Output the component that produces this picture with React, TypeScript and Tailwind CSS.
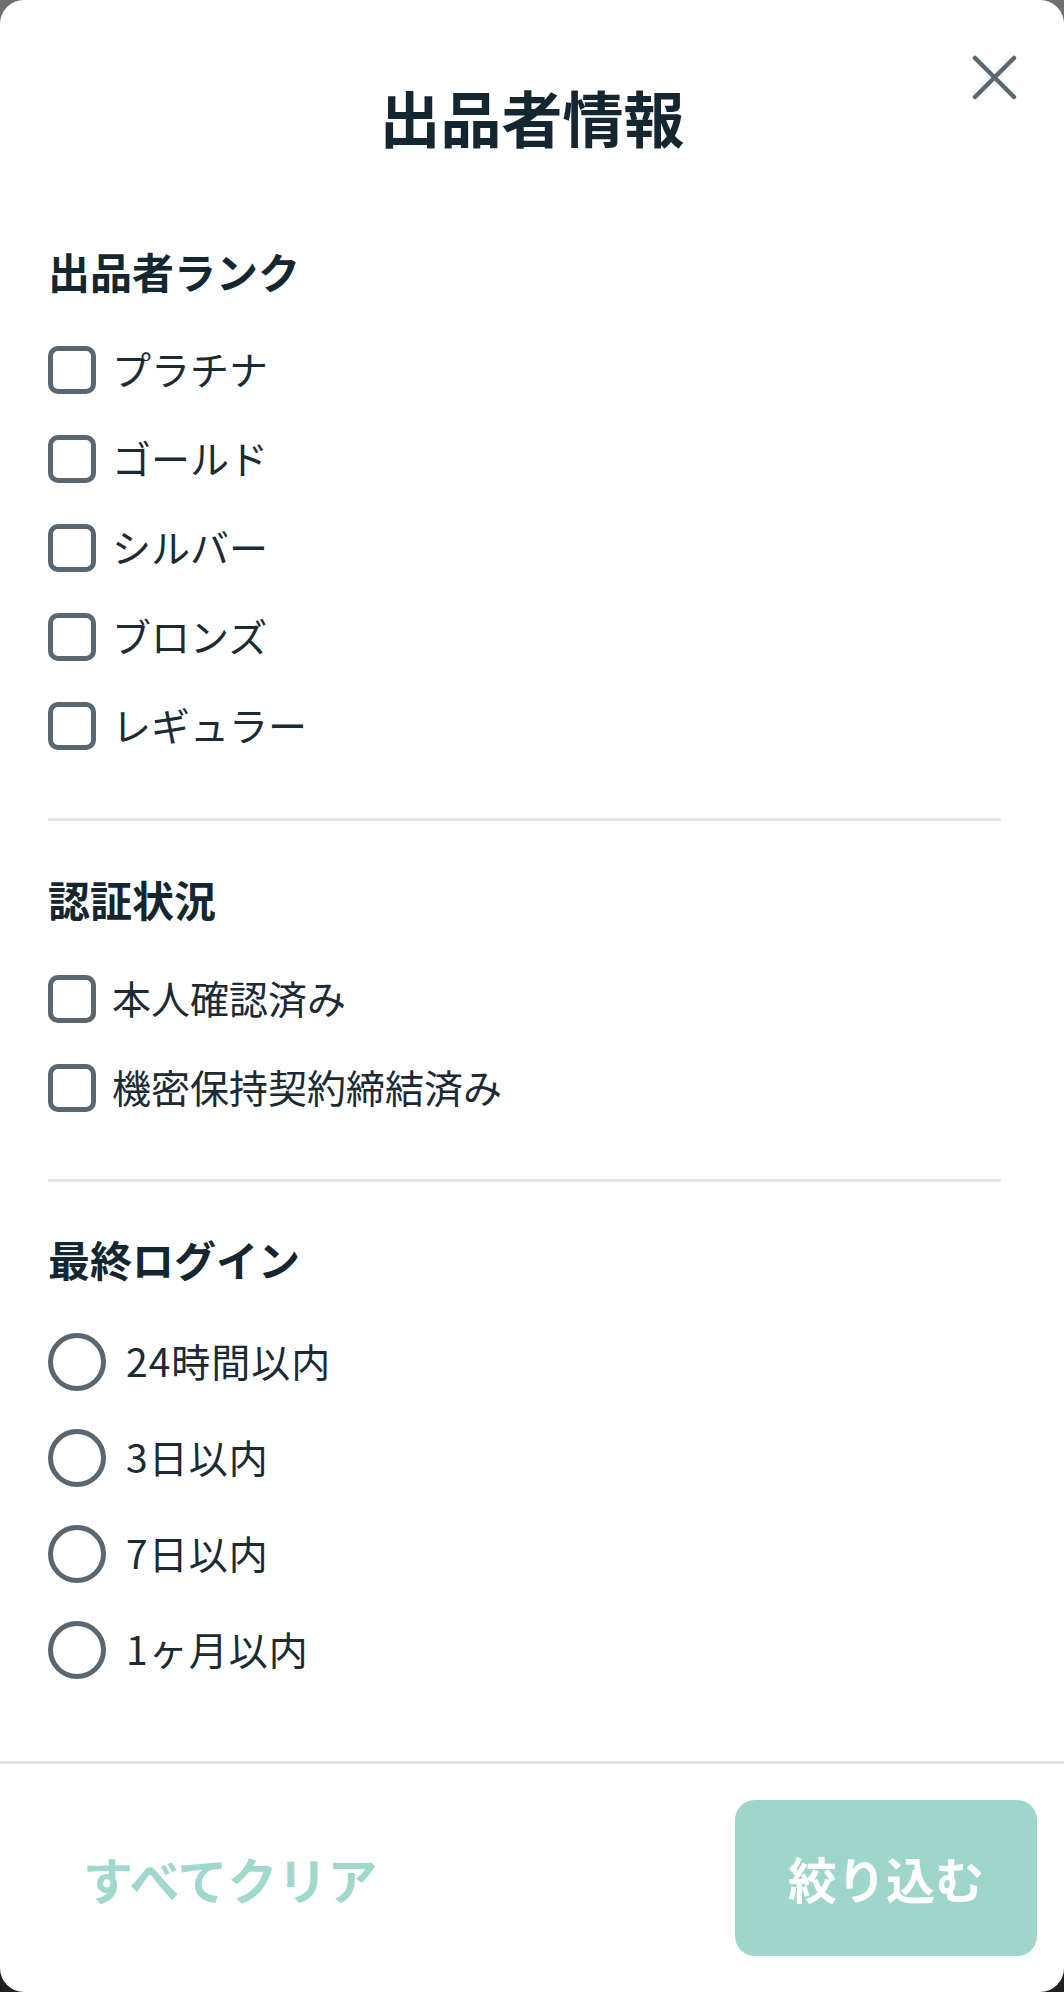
const font = { fontFamily: '"Noto Sans CJK JP", "Noto Sans", sans-serif' };

const ranks = ["プラチナ", "ゴールド", "シルバー", "ブロンズ", "レギュラー"];
const verifications = ["本人確認済み", "機密保持契約締結済み"];
const logins = ["24時間以内", "3日以内", "7日以内", "1ヶ月以内"];

function CheckRow({ label }: { label: string }) {
  return (
    <label className="flex items-center gap-[16px]">
      <span className="h-[48px] w-[48px] shrink-0 rounded-[10px] border-[5px] border-[#5a6670]" />
      <span className="-translate-y-[2px] text-[39px] leading-[48px] text-[#1b2a33]">{label}</span>
    </label>
  );
}

function RadioRow({ label }: { label: string }) {
  return (
    <label className="flex items-center gap-[20px]">
      <span className="h-[58px] w-[58px] shrink-0 rounded-full border-[5px] border-[#5a6670]" />
      <span className="-translate-y-[2px] text-[39px] leading-[58px] tracking-[1px] text-[#1b2a33]">{label}</span>
    </label>
  );
}

function SectionTitle({ children }: { children: string }) {
  return <h2 className="text-[42px] font-bold leading-[42px] text-[#14262f]">{children}</h2>;
}

export default function App() {
  return (
    <div className="h-[1992px] w-[1064px] bg-linear-to-b from-[#707070] to-[#202020]" style={font}>
      <div className="flex h-full w-full flex-col overflow-hidden rounded-[24px] bg-white">
        <header className="relative pt-[87px]">
          <h1 className="text-center text-[61px] font-bold leading-[60px] text-[#14262f]">出品者情報</h1>
          <button type="button" aria-label="閉じる" className="absolute right-[47px] top-[55px] h-[45px] w-[45px]">
            <svg viewBox="0 0 45 45" className="h-full w-full" fill="none" stroke="#5a6670" strokeWidth="4.5" strokeLinecap="round">
              <path d="M3 3 L42 42 M42 3 L3 42" />
            </svg>
          </button>
        </header>

        <div className="flex-1 pl-[48px] pr-[63px]">
          <section className="pt-[103px]">
            <SectionTitle>出品者ランク</SectionTitle>
            <div className="mt-[54px] flex flex-col gap-[41px]">
              {ranks.map((r) => (
                <CheckRow key={r} label={r} />
              ))}
            </div>
          </section>

          <div className="mt-[68px] h-[3px] bg-[#e5e6e6]" />

          <section className="pt-[57px]">
            <SectionTitle>認証状況</SectionTitle>
            <div className="mt-[55px] flex flex-col gap-[41px]">
              {verifications.map((v) => (
                <CheckRow key={v} label={v} />
              ))}
            </div>
          </section>

          <div className="mt-[67px] h-[3px] bg-[#e5e6e6]" />

          <section className="pt-[56px]">
            <SectionTitle>最終ログイン</SectionTitle>
            <div className="mt-[53px] flex flex-col gap-[38px]">
              {logins.map((l) => (
                <RadioRow key={l} label={l} />
              ))}
            </div>
          </section>
        </div>

        <footer className="flex items-center justify-between border-t-[3px] border-[#e6e6e6] pb-[36px] pl-[83px] pr-[27px] pt-[36px]">
          <button type="button" className="text-[50px] font-bold text-[#a0d8cd]">
            すべてクリア
          </button>
          <button
            type="button"
            className="flex h-[156px] w-[302px] items-center justify-center rounded-[20px] bg-[#9fd6cc] text-[49px] font-bold text-white"
          >
            絞り込む
          </button>
        </footer>
      </div>
    </div>
  );
}
